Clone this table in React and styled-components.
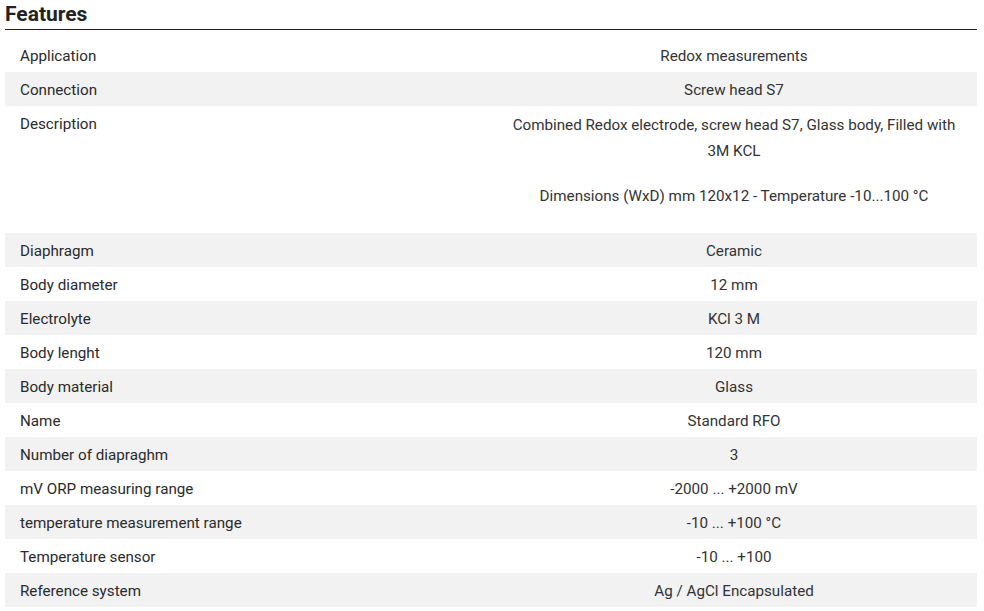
import React from "react";
import styled, { createGlobalStyle } from "styled-components";

const GlobalStyle = createGlobalStyle`
  body {
    margin: 0;
    background: #ffffff;
    font-family: Roboto, "Liberation Sans", sans-serif;
    color: #333333;
  }
`;

const Container = styled.div`
  width: 972px;
  padding: 0 0 0 5px;
`;

const Title = styled.h2`
  margin: 0;
  padding-top: 1px;
  font-size: 21px;
  line-height: 26px;
  font-weight: 700;
  color: #222222;
  border-bottom: 1px solid #2b0d6e;
  padding-bottom: 2px;
`;

const Table = styled.div`
  margin-top: 8px;
  display: flex;
  flex-direction: column;
`;

const Row = styled.div`
  display: grid;
  grid-template-columns: 1fr 1fr;
  background: ${(p) => (p.shaded ? "#f2f2f2" : "#ffffff")};
  font-size: 15.2px;
  line-height: 22px;
`;

const Label = styled.div`
  padding: 7px 15px 5px;
  color: #2a2a2a;
`;

const Value = styled.div`
  padding: 7px 15px 5px;
  text-align: center;
  color: #333333;
`;

const Para = styled.p`
  margin: 0 0 19px;
  line-height: 26px;

  &:first-child {
    margin-top: -1px;
  }
`;

const rows = [
  ["Application", "Redox measurements"],
  ["Connection", "Screw head S7"],
  ["Description", null],
  ["Diaphragm", "Ceramic"],
  ["Body diameter", "12 mm"],
  ["Electrolyte", "KCl 3 M"],
  ["Body lenght", "120 mm"],
  ["Body material", "Glass"],
  ["Name", "Standard RFO"],
  ["Number of diapraghm", "3"],
  ["mV ORP measuring range", "-2000 ... +2000 mV"],
  ["temperature measurement range", "-10 ... +100 °C"],
  ["Temperature sensor", "-10 ... +100"],
  ["Reference system", "Ag / AgCl Encapsulated"],
];

const App = () => {
  return (
    <Container>
      <GlobalStyle />
      <Title>Features</Title>
      <Table>
        {rows.map(([label, value], i) => (
          <Row key={label} shaded={i % 2 === 1}>
            <Label>{label}</Label>
            {value !== null ? (
              <Value>{value}</Value>
            ) : (
              <Value>
                <Para>
                  Combined Redox electrode, screw head S7, Glass body, Filled with
                  <br />
                  3M KCL
                </Para>
                <Para>Dimensions (WxD) mm 120x12 - Temperature -10...100 °C</Para>
              </Value>
            )}
          </Row>
        ))}
      </Table>
    </Container>
  );
};

export default App;
